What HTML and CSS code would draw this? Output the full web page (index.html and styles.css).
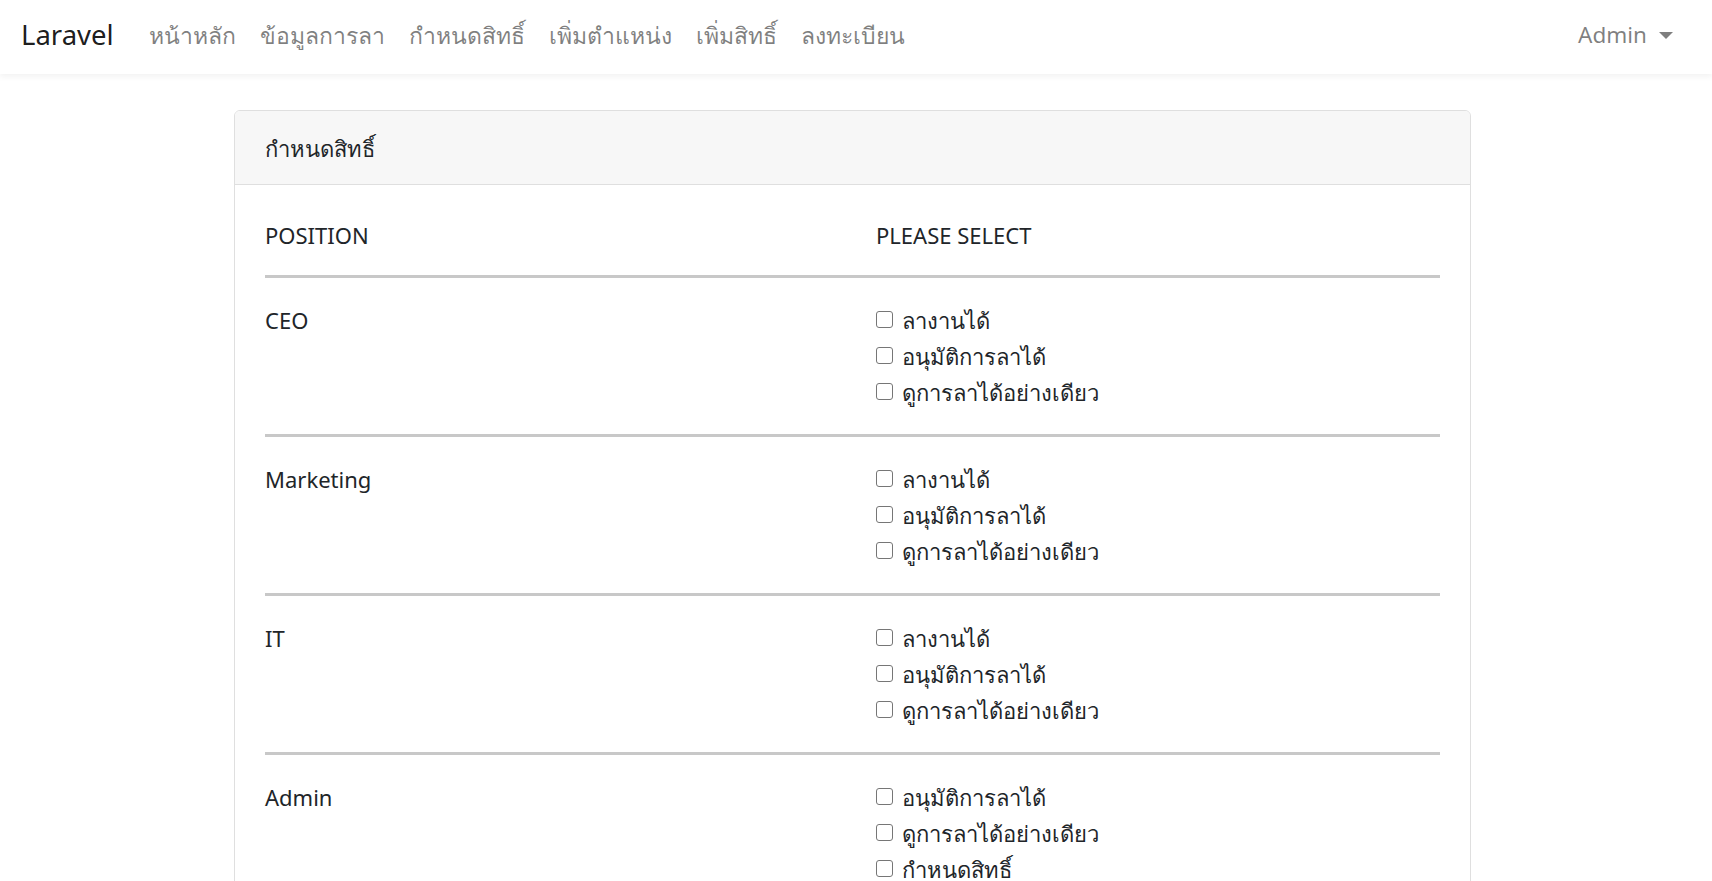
FILE: index.html
```html
<!DOCTYPE html>
<html lang="th">
<head>
<meta charset="utf-8">
<title>Laravel</title>
<link rel="stylesheet" href="styles.css">
</head>
<body>
<nav class="navbar">
  <a class="brand" href="#">Laravel</a>
  <ul class="nav">
    <li><a class="nav-link" href="#">หน้าหลัก</a></li>
    <li><a class="nav-link" href="#">ข้อมูลการลา</a></li>
    <li><a class="nav-link" href="#">กำหนดสิทธิ์</a></li>
    <li><a class="nav-link" href="#">เพิ่มตำแหน่ง</a></li>
    <li><a class="nav-link" href="#">เพิ่มสิทธิ์</a></li>
    <li><a class="nav-link" href="#">ลงทะเบียน</a></li>
  </ul>
  <div class="nav-right">
    <a class="nav-link user" href="#">Admin <span class="caret"></span></a>
  </div>
</nav>

<main class="main">
  <section class="card">
    <div class="card-header">กำหนดสิทธิ์</div>
    <div class="card-body">
      <div class="grid head">
        <div class="cell">POSITION</div>
        <div class="cell">PLEASE SELECT</div>
      </div>

      <div class="grid row">
        <div class="cell">CEO</div>
        <div class="cell opts">
          <label class="opt"><input type="checkbox"><span>ลางานได้</span></label>
          <label class="opt"><input type="checkbox"><span>อนุมัติการลาได้</span></label>
          <label class="opt"><input type="checkbox"><span>ดูการลาได้อย่างเดียว</span></label>
        </div>
      </div>

      <div class="grid row">
        <div class="cell">Marketing</div>
        <div class="cell opts">
          <label class="opt"><input type="checkbox"><span>ลางานได้</span></label>
          <label class="opt"><input type="checkbox"><span>อนุมัติการลาได้</span></label>
          <label class="opt"><input type="checkbox"><span>ดูการลาได้อย่างเดียว</span></label>
        </div>
      </div>

      <div class="grid row">
        <div class="cell">IT</div>
        <div class="cell opts">
          <label class="opt"><input type="checkbox"><span>ลางานได้</span></label>
          <label class="opt"><input type="checkbox"><span>อนุมัติการลาได้</span></label>
          <label class="opt"><input type="checkbox"><span>ดูการลาได้อย่างเดียว</span></label>
        </div>
      </div>

      <div class="grid row">
        <div class="cell">Admin</div>
        <div class="cell opts">
          <label class="opt"><input type="checkbox"><span>อนุมัติการลาได้</span></label>
          <label class="opt"><input type="checkbox"><span>ดูการลาได้อย่างเดียว</span></label>
          <label class="opt"><input type="checkbox"><span>กำหนดสิทธิ์</span></label>
        </div>
      </div>
    </div>
  </section>
</main>
</body>
</html>
```

FILE: styles.css
```css
* { box-sizing: border-box; }

html, body {
  margin: 0;
  padding: 0;
}

body {
  background: #ffffff;
  color: #212529;
  font-family: "Noto Sans", "Open Sans", sans-serif;
  font-size: 22px;
  line-height: 36px;
  overflow: hidden;
}

a { text-decoration: none; }

/* ---------- navbar ---------- */
.navbar {
  height: 74px;
  display: flex;
  align-items: center;
  padding: 0 27px 4px 21px;
  background: #ffffff;
  box-shadow: 0 3px 6px rgba(0, 0, 0, 0.05);
  position: relative;
  z-index: 2;
}

.brand {
  font-size: 27.5px;
  color: rgba(0, 0, 0, 0.9);
  margin-right: 23px;
  line-height: 40px;
}

.nav {
  display: flex;
  list-style: none;
  margin: 0;
  padding: 0;
}

.nav-link {
  display: block;
  padding: 0 12px;
  color: rgba(0, 0, 0, 0.5);
  font-size: 23px;
}

.nav-right {
  margin-left: auto;
}

.user {
  display: flex;
  align-items: center;
  font-size: 22.5px;
}

.caret {
  display: inline-block;
  width: 0;
  height: 0;
  margin-left: 12px;
  border-top: 7px solid rgba(0, 0, 0, 0.5);
  border-left: 7px solid transparent;
  border-right: 7px solid transparent;
}

/* ---------- main ---------- */
.main {
  padding: 36px 241px 0 234px;
}

.card {
  border: 1px solid #dfdfdf;
  border-radius: 6px;
  background: #ffffff;
  overflow: hidden;
}

.card-header {
  height: 74px;
  display: flex;
  align-items: center;
  padding: 0 30px;
  background: #f7f7f7;
  border-bottom: 1px solid #dfdfdf;
}

.card-body {
  padding: 14px 30px 0;
}

.grid {
  display: grid;
  grid-template-columns: 611px 1fr;
}

.head {
  padding: 18px 0 22px;
  border-bottom: 3px solid #c8c8c8;
}

.row {
  padding: 24px 0;
  border-bottom: 3px solid #c8c8c8;
}

.opts {
  display: flex;
  flex-direction: column;
}

.opt {
  display: flex;
  align-items: center;
  height: 36px;
}

.opt input {
  appearance: none;
  -webkit-appearance: none;
  width: 17px;
  height: 17px;
  margin: 0 9px 2px 0;
  border: 1px solid #767676;
  border-radius: 3px;
  background: #ffffff;
  flex: none;
}
```
